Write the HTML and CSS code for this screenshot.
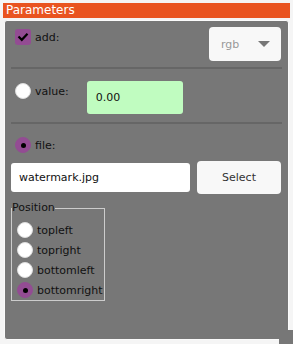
FILE: index.html
```html
<!DOCTYPE html>
<html lang="en">
<head>
    <meta charset="UTF-8">
    <title>Parameters</title>
    <link rel="stylesheet" href="styles.css">
</head>
<body>
    <div class="title">Parameters</div>
    <div class="panel">
        <div class="row row-add">
            <label class="opt">
                <span class="check">
                    <svg width="12" height="10" viewBox="0 0 12 10"><path d="M1.5 4.5 L4.8 7.8 L10.5 1.8" fill="none" stroke="#000" stroke-width="2.2"/></svg>
                </span>
                add:
            </label>
            <div class="combo">
                <span>rgb</span>
                <span class="arrow"></span>
            </div>
        </div>
        <div class="divider"></div>
        <div class="row row-value">
            <label class="opt"><span class="radio"></span>value:</label>
            <div class="num">0.00</div>
        </div>
        <div class="divider"></div>
        <div class="row row-file">
            <label class="opt"><span class="radio on"></span>file:</label>
        </div>
        <div class="row row-path">
            <div class="path">watermark.jpg</div>
            <div class="btn">Select</div>
        </div>
        <fieldset class="position">
            <legend>Position</legend>
            <label class="opt"><span class="radio"></span>topleft</label>
            <label class="opt"><span class="radio"></span>topright</label>
            <label class="opt"><span class="radio"></span>bottomleft</label>
            <label class="opt"><span class="radio on"></span>bottomright</label>
        </fieldset>
    </div>
    <div class="grip"></div>
</body>
</html>
```
FILE: styles.css
```css
body {
    margin: 0;
    padding: 0;
    width: 293px;
    height: 344px;
    position: relative;
    overflow: hidden;
    background-color: #f5f5f5;
    font-family: 'DejaVu Sans', sans-serif;
    font-size: 11px;
    color: #111;
}

.title {
    margin: 3px 3px 0 3px;
    height: 15px;
    line-height: 15px;
    padding-left: 3px;
    background-color: #e95420;
    color: #fff;
    font-size: 12px;
}

.panel {
    margin: 2px 4px 0 4px;
    height: 318px;
    padding: 0 6px;
    background-color: #777;
    border: 1px solid #fbfbfb;
    border-radius: 3px;
}

.row {
    display: flex;
    align-items: flex-start;
}

.row-add {
    justify-content: space-between;
    padding-top: 6px;
}

.opt {
    display: flex;
    align-items: center;
    gap: 4px;
    padding-left: 4px;
    height: 16px;
}

.row-add .opt {
    margin-top: 2px;
}

.check {
    width: 16px;
    height: 16px;
    border-radius: 3px;
    background-color: #934c93;
    display: flex;
    justify-content: center;
    align-items: center;
}

.radio {
    width: 16px;
    height: 16px;
    box-sizing: border-box;
    border-radius: 50%;
    background-color: #fff;
    border: 1px solid #ddd;
    display: flex;
    justify-content: center;
    align-items: center;
}

.radio.on {
    background-color: #934c93;
    border-color: #934c93;
}

.radio.on::after {
    content: "";
    width: 5px;
    height: 5px;
    border-radius: 50%;
    background-color: #000;
}

.combo {
    width: 72px;
    height: 34px;
    margin-right: 1px;
    box-sizing: border-box;
    padding: 0 11px 0 12px;
    background-color: #f8f8f8;
    border-radius: 4px;
    display: flex;
    justify-content: space-between;
    align-items: center;
    color: #999;
}

.arrow {
    width: 0;
    height: 0;
    border-left: 6px solid transparent;
    border-right: 6px solid transparent;
    border-top: 6px solid #777;
}

.divider {
    height: 2px;
    background-color: #666;
    margin: 6px 0 0 0;
}

.row-value {
    padding-top: 12px;
    height: 33px;
}

.row-value .opt {
    margin-top: 2px;
}

.num {
    margin-left: 18px;
    width: 96px;
    height: 33px;
    box-sizing: border-box;
    padding-left: 9px;
    line-height: 33px;
    background-color: #c0fcc0;
    border-radius: 3px;
}

.row-value + .divider {
    margin-top: 8px;
}

.row-file {
    padding-top: 13px;
}

.row-path {
    margin-top: 8px;
    gap: 7px;
    align-items: center;
}

.path {
    width: 179px;
    height: 29px;
    box-sizing: border-box;
    padding-left: 8px;
    line-height: 29px;
    background-color: #fff;
    border-radius: 3px;
    color: #111;
}

.btn {
    width: 84px;
    height: 33px;
    line-height: 33px;
    text-align: center;
    background-color: #f8f8f8;
    border-radius: 4px;
    color: #333;
}

.position {
    width: 94px;
    box-sizing: border-box;
    margin: 8px 0 0 0;
    padding: 8px 0 2px 1px;
    border: 1px solid #ccc;
    display: flex;
    flex-direction: column;
    gap: 4px;
}

.position legend {
    padding: 0;
    margin-left: -1px;
    line-height: 12px;
}

.position .opt {
    padding-left: 4px;
}

.grip {
    position: absolute;
    right: 0;
    bottom: 0;
    width: 14px;
    height: 14px;
    background-color: #777;
}
```
